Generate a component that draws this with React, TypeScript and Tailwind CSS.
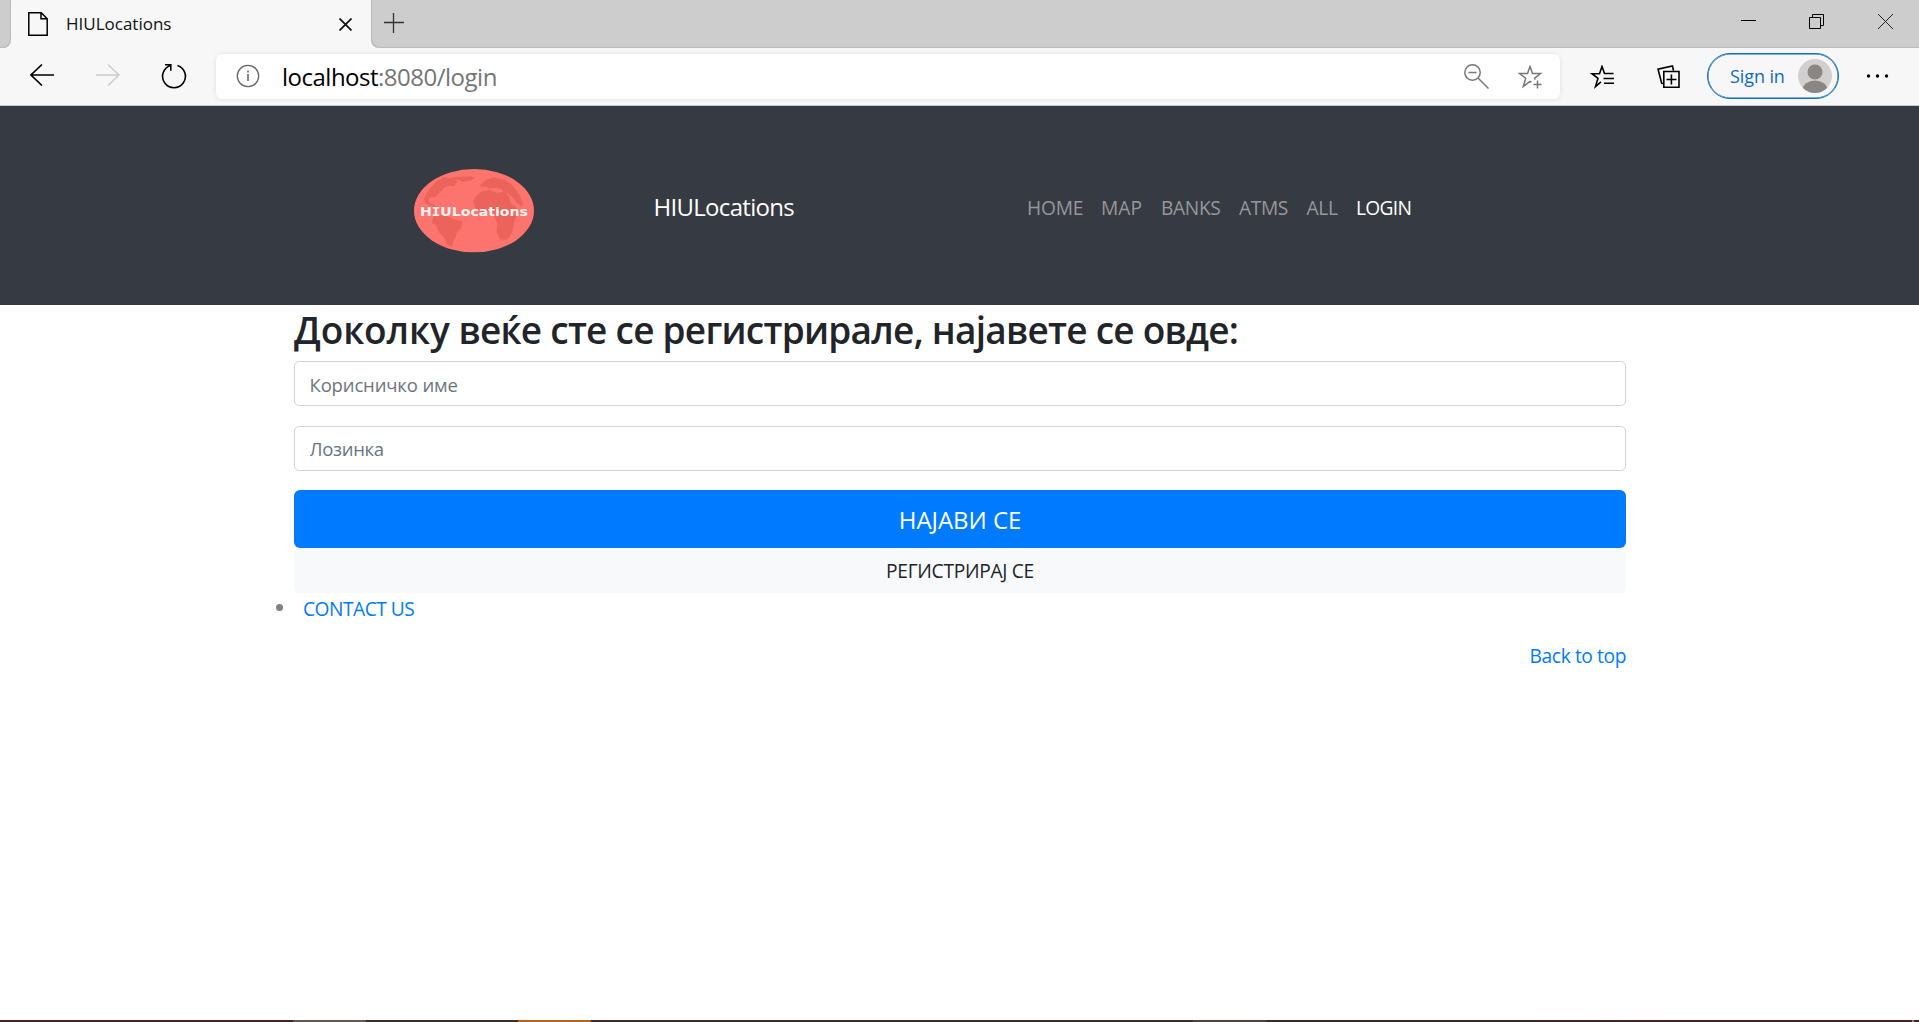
import type { ReactNode } from "react";

function TitleBar() {
  return (
    <div className="flex h-12 bg-[#f7f7f7]">
      <div className="h-12 w-[11px] rounded-br-lg bg-[#cdcdcd] shadow-[inset_-1px_-1px_1px_#bbbbbb]" />
      <div className="flex h-12 w-[360px] items-center rounded-t-lg bg-[#f7f7f7] pl-[17px]">
        <svg width="20" height="24" viewBox="0 0 20 24" fill="none" stroke="#000" strokeWidth="1.5">
          <path d="M.8.8h12.400l6 6V23.200H.8zM13 .8v6h6.200" />
        </svg>
        <span className="ml-[18px] w-[273px] text-[17px] leading-6 whitespace-nowrap text-[#111]">HIULocations</span>
        <svg width="13" height="13" viewBox="0 0 13 13" stroke="#111" strokeWidth="1.7" className="mt-px">
          <path d="M.5.5l12 12M12.500.5l-12 12" />
        </svg>
      </div>
      <div className="flex h-12 flex-1 items-start rounded-bl-lg bg-[#cdcdcd] pr-[26px] pl-[13px] shadow-[inset_1px_-1px_1px_#bbbbbb]">
        <svg width="20" height="20" viewBox="0 0 20 20" stroke="#333" strokeWidth="1.3" className="mt-[13px]">
          <path d="M9.500 0v20M0 9.500h20" />
        </svg>
        <div className="ml-auto flex items-start pt-[14px]">
          <svg width="15" height="15" viewBox="0 0 15 15" stroke="#000">
            <path d="M0 6.500h15" />
          </svg>
          <svg width="15" height="15" viewBox="0 0 15 15" fill="none" stroke="#000" className="ml-[53px]">
            <path d="M.5 3.500h11v11H.5zM3.500 3V.5h11v11H12" />
          </svg>
          <svg width="15" height="15" viewBox="0 0 15 15" stroke="#222" className="ml-[54px]">
            <path d="M0 0l15 15M15 0L0 15" />
          </svg>
        </div>
      </div>
    </div>
  );
}

function Toolbar() {
  return (
    <div className="flex h-[58px] items-start border-b border-[#c8c8c8] bg-[#f7f7f7]">
      <svg width="24" height="22" viewBox="0 0 24 22" fill="none" stroke="#000" strokeWidth="1.6" className="mt-4 ml-[30px]">
        <path d="M24 11H1M12 .5L1 11l11 10.500" />
      </svg>
      <svg width="24" height="22" viewBox="0 0 24 22" fill="none" stroke="#ccc" strokeWidth="1.5" className="mt-4 ml-[42px]">
        <path d="M0 11h23M12 .5L23 11 12 21.500" />
      </svg>
      <svg width="26" height="26" viewBox="0 0 26 26" fill="none" stroke="#000" strokeWidth="1.6" className="mt-[15px] ml-[41px]">
        <path d="M16.500 2.500A11.400 11.400 0 1 1 9.500 2.500M4 1.800h5.800v6" />
      </svg>
      <div className="mt-[6px] ml-[29px] flex h-[45px] w-[1344px] items-start rounded-md bg-white pr-[17px] pl-5 shadow-[0_0_5px_rgba(0,0,0,0.1)]">
        <svg width="24" height="24" viewBox="0 0 24 24" fill="none" stroke="#666" strokeWidth="1.3" className="mt-[10px]">
          <circle cx="12" cy="12" r="10.700" />
          <path d="M12 10v7M12 6.500v2" strokeWidth="1.500" />
        </svg>
        <span className="mt-[7px] ml-[22px] text-[24px] leading-8 tracking-[-0.5px] whitespace-nowrap text-[#767676]">
          <span className="tracking-[-0.5px] text-black">localhost</span>:8080/login
        </span>
        <svg width="25" height="25" viewBox="0 0 25 25" fill="none" stroke="#777" strokeWidth="1.500" className="mt-[10px] ml-auto">
          <circle cx="8.500" cy="8.500" r="7.700" />
          <path d="M4.500 8.500h8M14 14l10.500 10.500" />
        </svg>
        <svg width="25" height="25" viewBox="0 0 25 25" fill="none" stroke="#777" strokeWidth="1.500" className="mt-[11px] ml-[29px]">
          <path d="M13.500 17.200L12 16.300 5.300 21.500l2.400-8.300L1.500 8.500h8L12 1.500l2.500 7h8l-5.800 4.600.4 1.500M19.500 15.500v8M15.500 19.500h8" />
        </svg>
      </div>
      <svg width="25" height="25" viewBox="0 0 25 25" fill="none" stroke="#000" strokeWidth="1.600" className="mt-[17px] ml-[30px]">
        <path d="M11 16.800L5.500 21.500 8 13.300 2 8.700h7.500L12 1.500l2.500 7h9M13.500 13.500H24M14 18.300h10" />
      </svg>
      <svg width="23" height="24" viewBox="0 0 23 24" fill="none" stroke="#000" strokeWidth="1.600" className="mt-[17px] ml-[42px]">
        <path d="M6.500 18.500l-1.800-.2L1 4.200 15.500 1l1 4.500M6.800 6.500h15.200v15.700H6.800zM14.400 9.500v10M9.500 14.500h10" />
      </svg>
      <div className="mt-[5px] ml-[27px] flex h-[46px] w-[132px] items-center rounded-full border-[1.5px] border-[#0f6cbd] pl-[22px] text-[#0f6cbd] shadow-[inset_0_0_0_0.5px_#0f6cbd]">
        <span className="w-[68px] text-[18px] leading-6 tracking-[-0.1px] whitespace-nowrap">Sign in</span>
        <svg width="34" height="34" viewBox="0 0 34 34">
          <clipPath id="avatar">
            <circle cx="17" cy="17" r="17" />
          </clipPath>
          <g clipPath="url(#avatar)">
            <rect width="34" height="34" fill="#d2d0ce" />
            <circle cx="17" cy="13" r="7.500" fill="#8a8683" />
            <ellipse cx="17" cy="31" rx="12.500" ry="9.500" fill="#8a8683" />
          </g>
        </svg>
      </div>
      <svg width="23" height="4" viewBox="0 0 23 4" className="mt-[26px] ml-[27px]">
        <circle cx="2.500" cy="2" r="1.700" />
        <circle cx="11.500" cy="2" r="1.700" />
        <circle cx="20.500" cy="2" r="1.700" />
      </svg>
    </div>
  );
}

function Logo() {
  return (
    <svg width="132" height="94" viewBox="0 0 396 282" className="mt-[11px]">
      <defs>
        <clipPath id="globe">
          <ellipse cx="198" cy="140" rx="179" ry="124" />
        </clipPath>
      </defs>
      <ellipse cx="198" cy="140" rx="180" ry="125" fill="#fc746d" />
      <g fill="#ec635b" clipPath="url(#globe)">
        <path d="M52 118L48 104 56 86 70 68 88 50 108 40 138 44 148 54 138 66 122 66 108 72 98 84 88 92 80 102 72 98 62 104 64 116 76 122 88 132 76 130z" />
        <path d="M118 46l24-7 48-2 12 5-16 8-24 4-10-7-20 3z" />
        <path d="M76 156l20-2 22 2 14 8 30 8-2 20-14 14-4 16-6 8-2 12-4 6-14-8-8-20-14-14-10-22-12-8z" />
        <path d="M222 58l12-10 24-8 32 8 26 18 20 30 10 26-8 4-12-10-16-20-12-10-10 2-8-12-12-4-10 0-16 2-6-6-14 2-6-6z" />
        <path d="M196 112l8-16 18-14 24-4 20 8 24-2 12 12 8 24 14 8 8 18-12 24-6 28-8 20-12 10-18-2-10-22 2-24-8-18-4-16-14-4-24 2-18-16z" />
      </g>
      <text fill="#fff5f3" x="36" y="156" fontSize="38" fontWeight="700" fontFamily="DejaVu Sans" textLength="324" lengthAdjust="spacingAndGlyphs">
        H<tspan fontFamily="DejaVu Sans Mono">I</tspan>ULocations
      </text>
    </svg>
  );
}

function NavItem({ className, children }: { className: string; children: ReactNode }) {
  return (
    <a href="#" className={`block whitespace-nowrap ${className}`}>
      {children}
    </a>
  );
}

function SiteNav() {
  return (
    <nav className="flex h-[199px] items-center bg-[#363a42] pl-[408px]">
      <Logo />
      <span className="mt-[3px] ml-[113.500px] w-[373.500px] text-[24px] leading-9 tracking-[-0.7px] whitespace-nowrap text-white">
        HIULocations
      </span>
      <div className="mt-[4px] flex text-[19.200px] leading-[29px] text-[#969899]">
        <NavItem className="w-[74px] tracking-[-0.2px]">HOME</NavItem>
        <NavItem className="w-[60px]">MAP</NavItem>
        <NavItem className="w-[78px] tracking-[-0.35px]">BANKS</NavItem>
        <NavItem className="w-[67.500px] tracking-[-0.4px]">ATMS</NavItem>
        <NavItem className="w-[49.500px] tracking-[-0.3px]">ALL</NavItem>
        <NavItem className="tracking-[-0.7px] text-white">LOGIN</NavItem>
      </div>
    </nav>
  );
}

function LoginForm() {
  return (
    <main className="ml-[294px] w-[1332px]">
      <h2 className="mb-[8px] pt-px text-[37px] leading-[47px] font-semibold tracking-[-0.75px] whitespace-nowrap text-[#212529]">
        <span className="tracking-[-0.1px]">Доколку</span> веќе сте се регистрирале, најавете се овде:
      </h2>
      <input
        placeholder="Корисничко име"
        className="mb-5 block h-[45px] w-full rounded-[5px] border border-[#ced4da] bg-white px-[14.500px] pt-[2px] text-[18.500px] tracking-[-0.15px] placeholder:text-[#6c757d] placeholder:opacity-100"
      />
      <input
        placeholder="Лозинка"
        className="mb-[19px] block h-[45px] w-full rounded-[5px] border border-[#ced4da] bg-white px-[14.500px] text-[18.500px] tracking-[-0.3px] placeholder:text-[#6c757d] placeholder:opacity-100"
      />
      <button className="block h-[58px] w-full rounded-md bg-[#007bff] pt-px text-[24px] tracking-[-0.05px] text-white">НАЈАВИ СЕ</button>
      <button className="block h-[45px] w-full rounded-[5px] bg-[#f8f9fa] pt-[2px] text-[19.200px] tracking-[-0.3px] text-[#212529]">РЕГИСТРИРАЈ СЕ</button>
      <div className="-ml-[18.500px] flex items-center text-[19.200px] leading-[29px]">
        <span className="size-[7.500px] rounded-full bg-[#808080]" />
        <a href="#" className="mt-px -mb-px ml-5 tracking-[-0.5px] text-[#007bff]">
          CONTACT US
        </a>
      </div>
      <div className="mt-[19px] text-right text-[19.200px] leading-[29px] tracking-[-0.4px]">
        <a href="#" className="text-[#007bff]">
          Back to top
        </a>
      </div>
    </main>
  );
}

function TaskbarEdge() {
  return (
    <div className="mt-auto flex h-[2px]">
      <div className="w-[293px] bg-[#4a2023]" />
      <div className="w-[73px] bg-[#65574d]" />
      <div className="w-[152px] bg-[#3a2f27]" />
      <div className="w-[73px] bg-[#b06524]" />
      <div className="w-[602px] bg-[#3a2d25]" />
      <div className="w-[73px] bg-[#51443a]" />
      <div className="flex-1 bg-linear-to-r from-[#3a2c24] from-40% to-[#4a1f24] to-60%" />
      <div className="w-[2px] bg-[#9a8080]" />
      <div className="w-[5px] bg-[#4a1f24]" />
    </div>
  );
}

export default function App() {
  return (
    <div className="flex h-[1022px] flex-col overflow-hidden bg-white font-['Open_Sans','Noto_Sans',sans-serif]">
      <TitleBar />
      <Toolbar />
      <SiteNav />
      <LoginForm />
      <TaskbarEdge />
    </div>
  );
}
